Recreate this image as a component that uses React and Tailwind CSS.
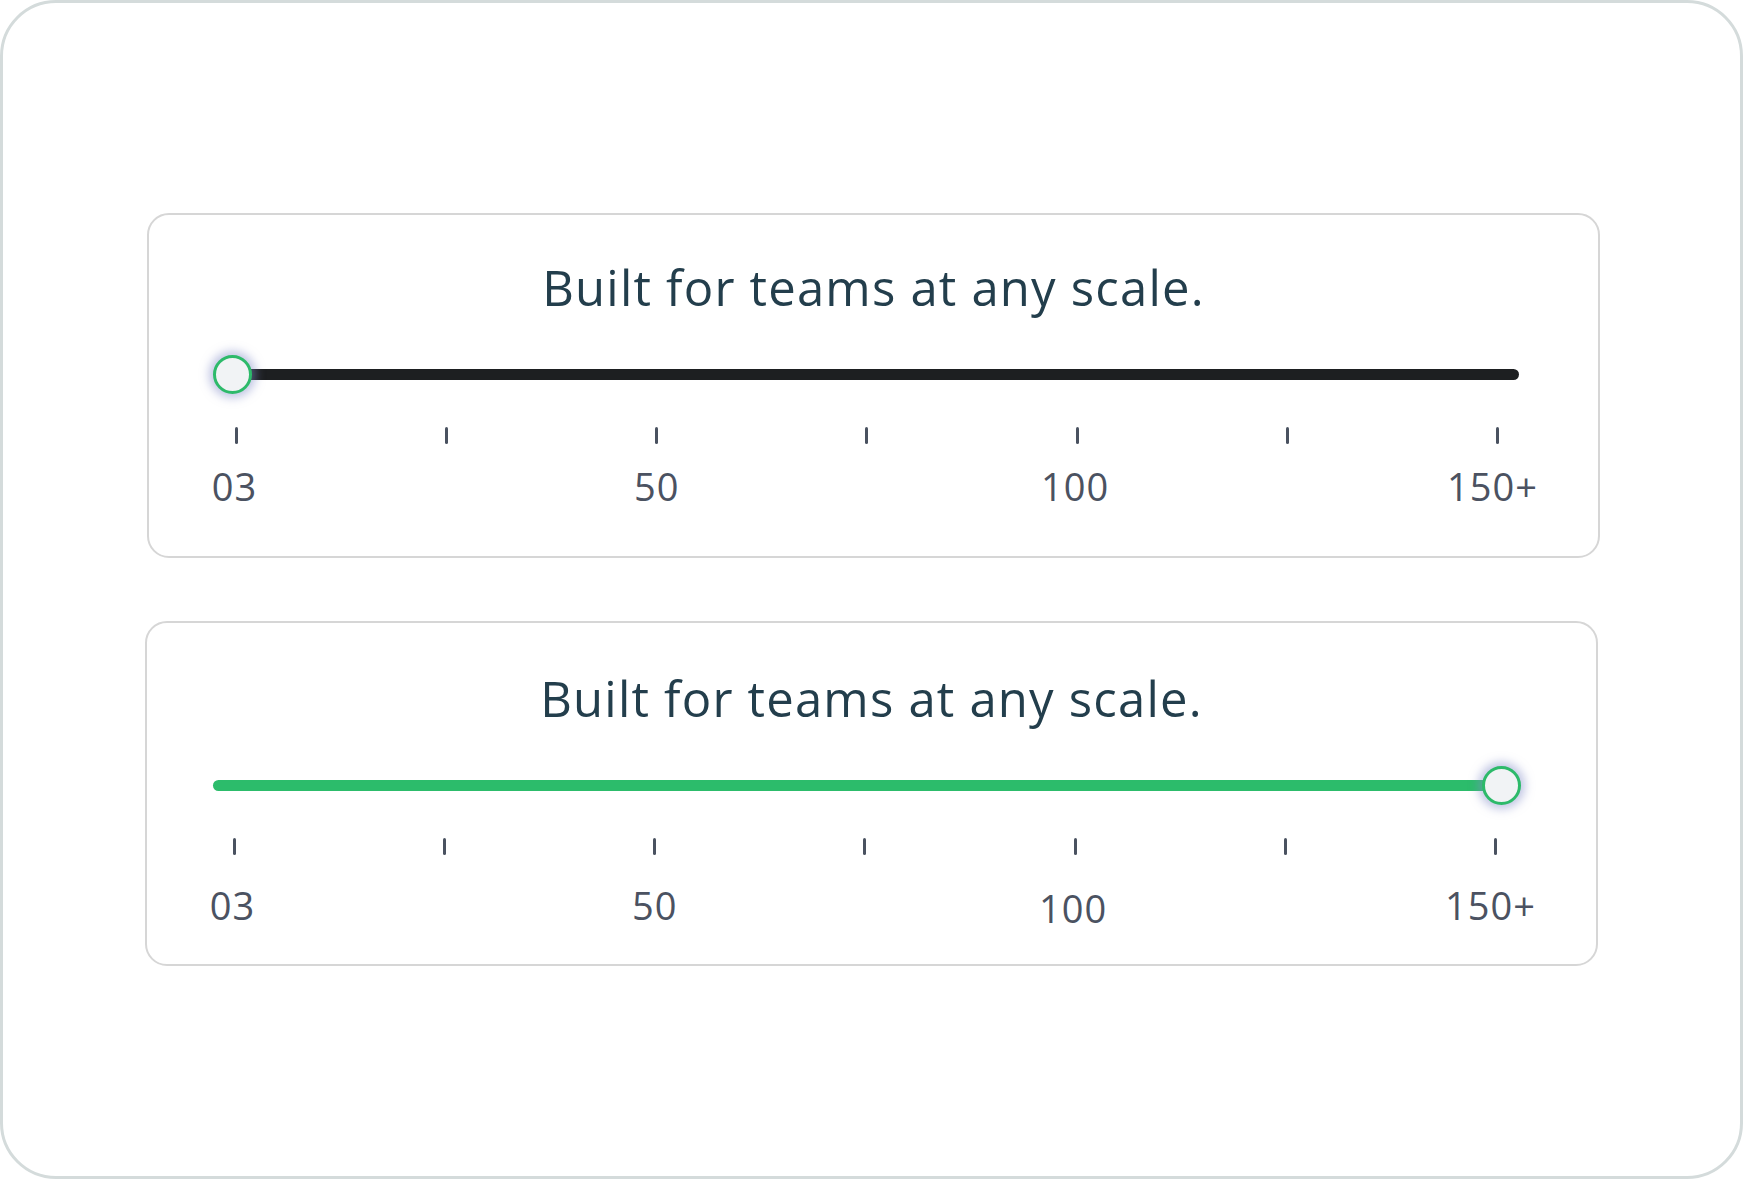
import React from "react";

const TICKS = [
  { t: "03", cls: "mr-[4px]" },
  { t: "", cls: "" },
  { t: "50", cls: "" },
  { t: "", cls: "" },
  { t: "100", cls: "mr-[4px]" },
  { t: "", cls: "" },
  { t: "150+", cls: "mr-[10px]" },
];

function Card({ ml, value, titleTop, labelGap, active }) {
  return (
    <div
      className={`${ml} w-[1453px] h-[345px] shrink-0 rounded-[22px] border-2 border-[#d6d6d6] bg-white flex flex-col`}
    >
      <div
        className={`${titleTop} text-center text-[49px] leading-[60px] font-medium tracking-[1.2px] text-[#233e4c]`}
        style={{ fontFamily: '"Open Sans", sans-serif' }}
      >
        Built for teams at any scale.
      </div>
      <div className="ml-[66px] w-[1304px] mt-[37px] relative h-[40px] flex items-center">
        <div
          className={`w-full h-[11px] rounded-full ${
            active ? "bg-[#2cbc6b]" : "bg-[#1d1f21]"
          }`}
        />
        <div
          className={`absolute top-[0.5px] ${
            value === 0 ? "left-[-2px]" : "left-[1269px]"
          } w-[39px] h-[39px] rounded-full border-[3px] border-[#2dba6a] bg-[#f1f3f5] shadow-[0_0_10px_4px_rgba(130,140,200,0.5)]`}
        />
      </div>
      <div className="ml-[66px] w-[1304px] mt-[33px] px-[20px] flex justify-between">
        {TICKS.map((k, i) => (
          <div key={i} className="w-[3px] flex flex-col items-center">
            <div className="w-[3px] h-[17px] rounded-full bg-[#4a5260]" />
            <div
              className={`${labelGap} ${k.cls} ${
                active && k.t === "100" ? "translate-y-[3px]" : ""
              } h-[46px] whitespace-nowrap text-[38px] leading-[46px] tracking-[1px] text-[#4b5261]`}
              style={{ fontFamily: '"Open Sans", sans-serif' }}
            >
              {k.t}
            </div>
          </div>
        ))}
      </div>
    </div>
  );
}

export default function App() {
  return (
    <div className="w-[1743px] h-[1179px] bg-white">
      <div className="w-full h-full rounded-[56px] border-[3px] border-[#d4dbdb] flex flex-col justify-center gap-[63px]">
        <Card ml="ml-[144px]" value={0} titleTop="mt-[42px]" labelGap="mt-[19px]" />
        <Card ml="ml-[142px]" value={1} titleTop="mt-[45px]" labelGap="mt-[27px]" active />
      </div>
    </div>
  );
}
